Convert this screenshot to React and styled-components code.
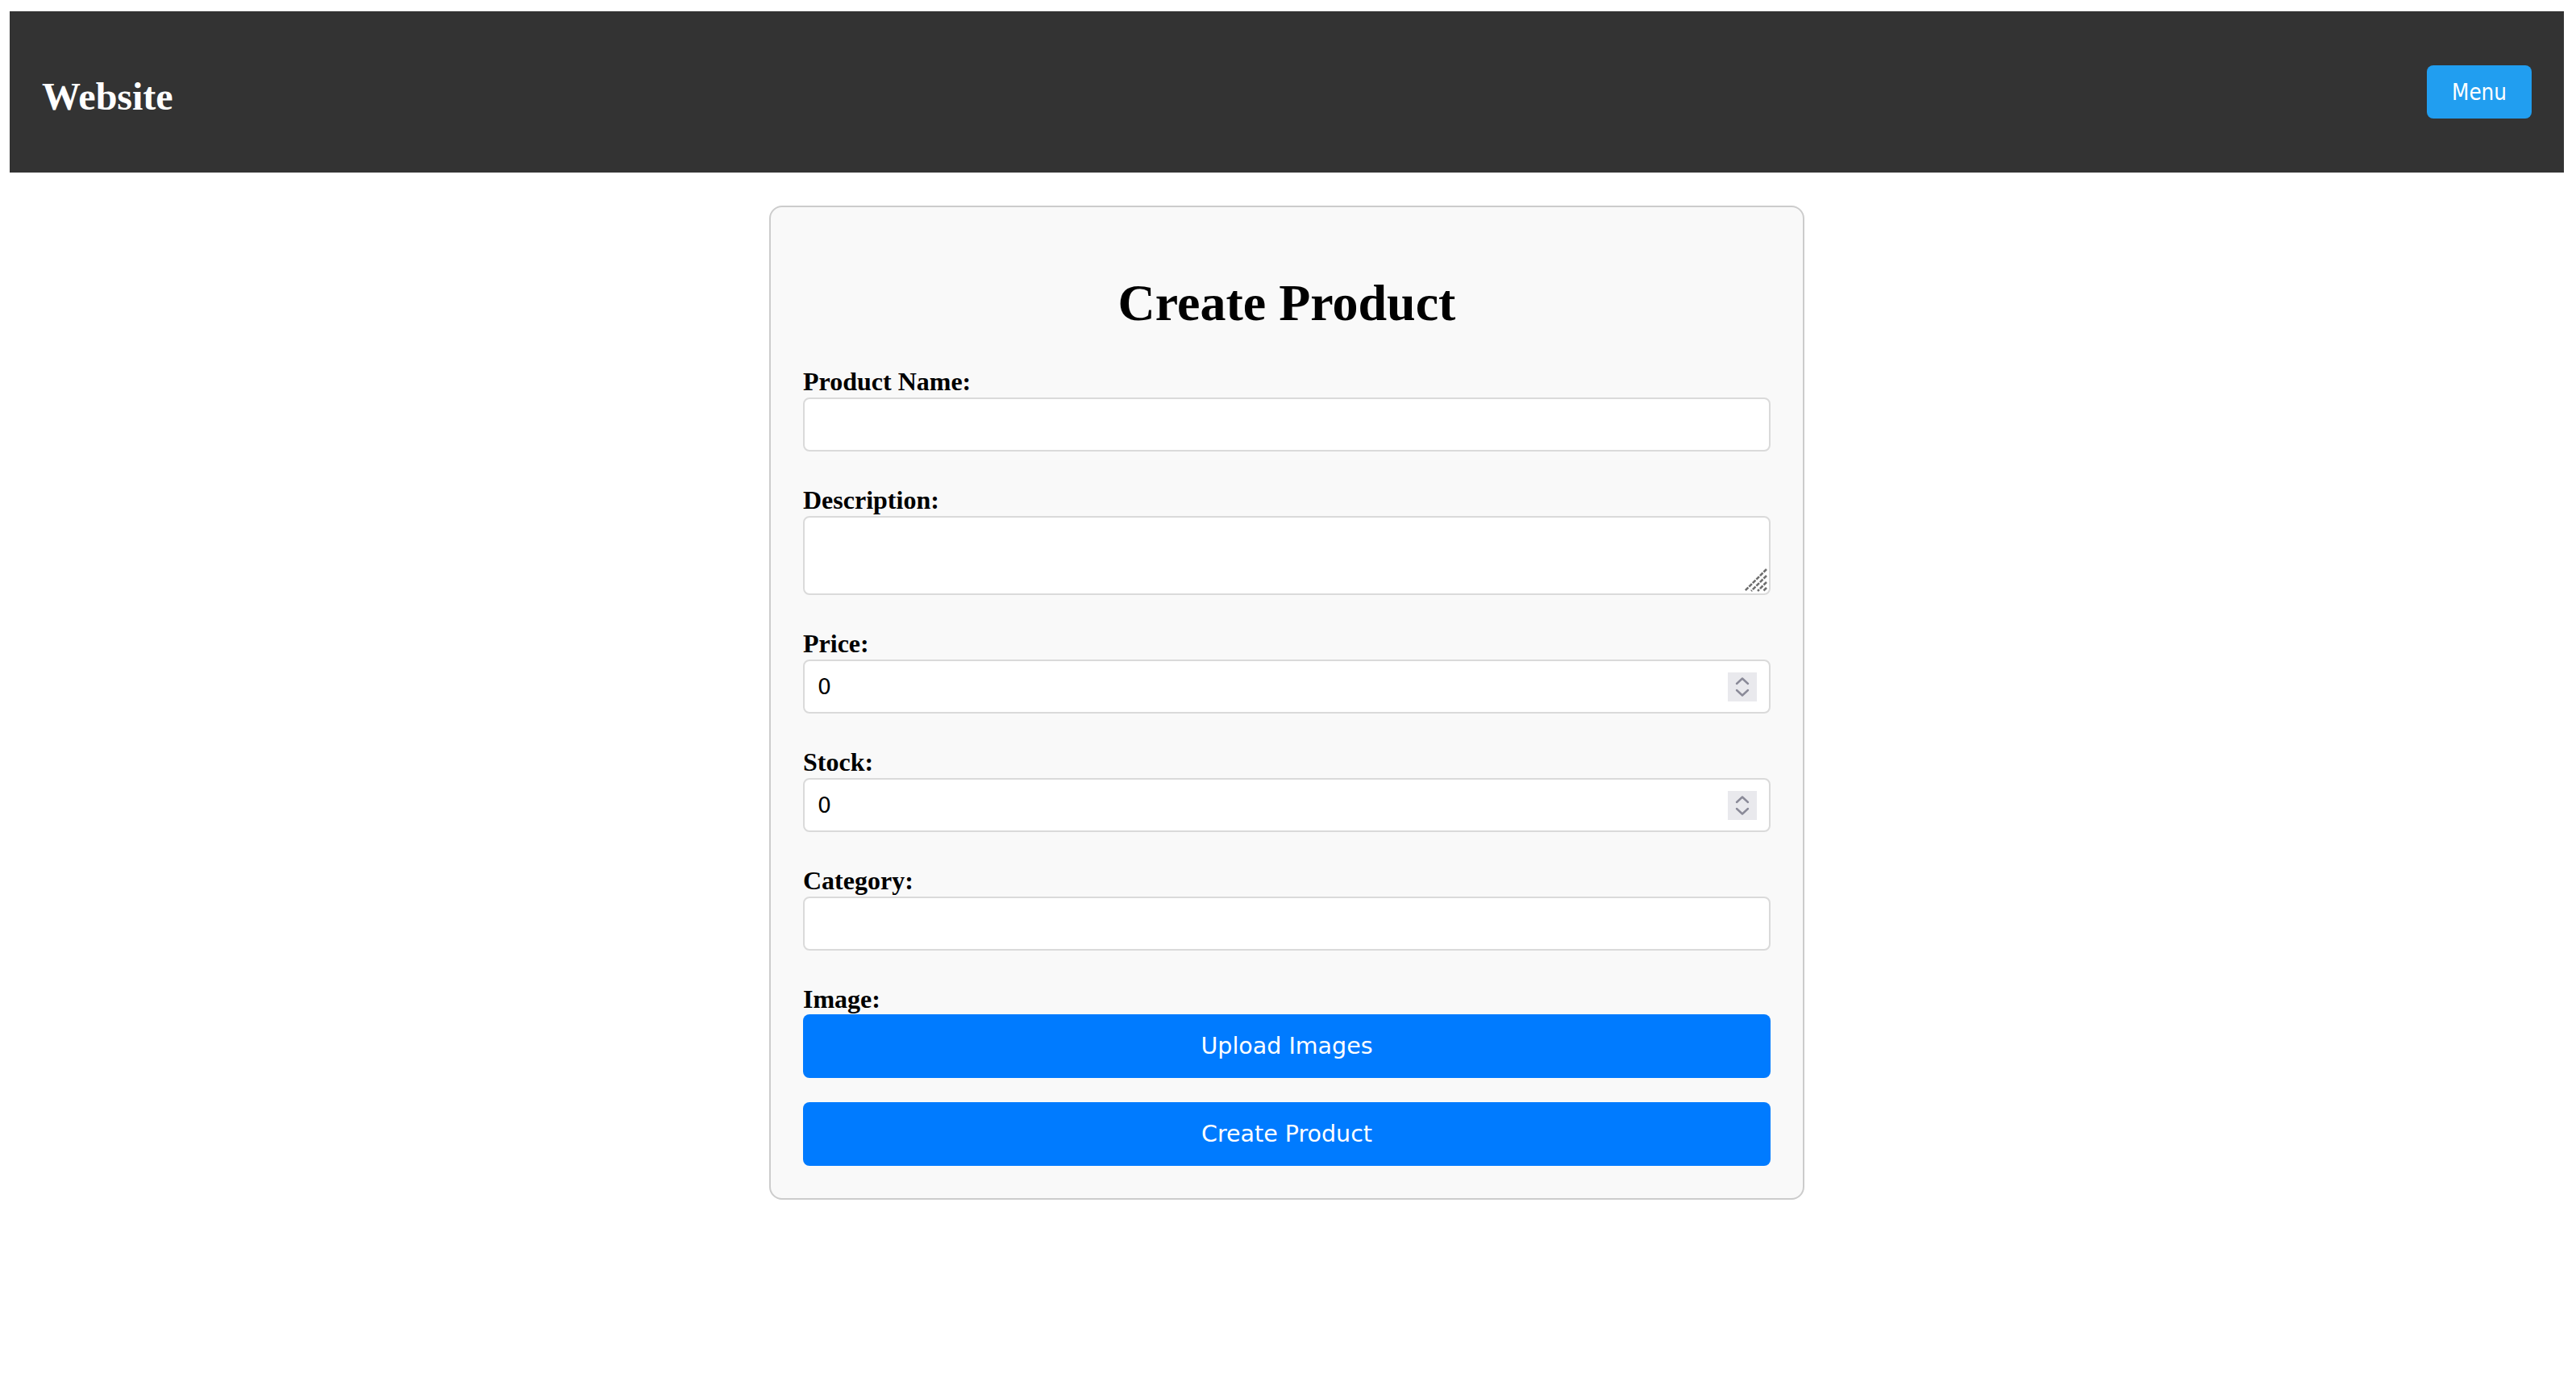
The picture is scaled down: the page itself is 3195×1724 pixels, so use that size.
import React from "react";
import styled, { createGlobalStyle } from "styled-components";

const GlobalStyle = createGlobalStyle`
  html, body {
    background: #ffffff;
  }
  body {
    margin: 14px 15px 0 12px;
    font-family: "Liberation Serif", "Times New Roman", serif;
    color: #000;
  }
  * {
    box-sizing: border-box;
  }
`;

const Header = styled.header`
  height: 200px;
  background: #333333;
  display: flex;
  align-items: center;
  justify-content: space-between;
  padding: 0 40px;
`;

const Logo = styled.h1`
  margin: 12px 0 0;
  font-family: "Liberation Serif", "Times New Roman", serif;
  font-weight: 700;
  font-size: 48px;
  line-height: 56px;
  color: #ffffff;
`;

const MenuButton = styled.button`
  height: 66px;
  padding: 0 31px;
  border: none;
  border-radius: 8px;
  background: #219ef0;
  color: #ffffff;
  font-family: "DejaVu Sans Condensed", "DejaVu Sans", sans-serif;
  font-stretch: condensed;
  font-size: 27.5px;
  cursor: pointer;
`;

const Card = styled.main`
  max-width: 1284px;
  margin: 41px auto 0;
  padding: 40px;
  border: 2px solid #cccccc;
  border-radius: 16px;
  background: #f9f9f9;
`;

const Title = styled.h2`
  margin: 43px 0 43px;
  text-align: center;
  font-family: "Liberation Serif", "Times New Roman", serif;
  font-weight: 700;
  font-size: 64px;
  line-height: 72px;
`;

const Form = styled.form`
  display: flex;
  flex-direction: column;
`;

const Group = styled.div`
  display: flex;
  flex-direction: column;
  margin-bottom: ${(p) => (p.$last ? "0" : "42px")};
`;

const Label = styled.label`
  display: block;
  margin-bottom: ${(p) => (p.$tight ? "1px" : "2px")};
  font-family: "Liberation Serif", "Times New Roman", serif;
  font-weight: 700;
  font-size: 32px;
  line-height: 36px;
`;

const fieldBase = `
  width: 100%;
  border: 2px solid #dadada;
  border-radius: 8px;
  background: #ffffff;
  font-family: "DejaVu Sans", Verdana, sans-serif;
  font-size: 26.67px;
  color: #000;
  outline: none;
`;

const TextInput = styled.input`
  ${fieldBase}
  display: block;
  height: 67px;
  padding: 0 16px;
`;

const AreaWrap = styled.div`
  position: relative;
`;

const TextArea = styled.textarea`
  ${fieldBase}
  display: block;
  height: 98px;
  padding: 16px;
  resize: none;
`;

const Grip = styled.svg`
  position: absolute;
  right: 4px;
  bottom: 4px;
  width: 29px;
  height: 29px;
  pointer-events: none;
`;

const NumberBox = styled.div`
  ${fieldBase}
  height: 67px;
  display: flex;
  align-items: center;
  gap: 12px;
  padding: 0 15px 0 16px;
`;

const NumberInput = styled.input`
  flex: 1;
  min-width: 0;
  border: none;
  background: transparent;
  padding: 0;
  font-family: "DejaVu Sans", Verdana, sans-serif;
  font-size: 26.67px;
  color: #000;
  outline: none;
  -moz-appearance: textfield;
  &::-webkit-inner-spin-button,
  &::-webkit-outer-spin-button {
    -webkit-appearance: none;
    margin: 0;
  }
`;

const SpinIcon = styled.svg`
  flex: none;
  width: 36px;
  height: 36px;
  display: block;
`;

const ActionButton = styled.button`
  display: block;
  width: 100%;
  height: 78.5px;
  margin-top: ${(p) => (p.$spaced ? "30.5px" : "0")};
  border: none;
  border-radius: 8px;
  background: #007bff;
  color: #ffffff;
  font-family: "DejaVu Sans", Verdana, sans-serif;
  font-size: 28.5px;
  cursor: pointer;
`;

function Spinner() {
  return (
    <SpinIcon viewBox="0 0 36 36" aria-hidden="true">
      <rect x="0" y="0" width="36" height="36" fill="#e9e9ed" />
      <polyline
        points="11,14 18,7.5 25,14"
        fill="none"
        stroke="#8a8a98"
        strokeWidth="2.4"
        strokeLinecap="round"
        strokeLinejoin="round"
      />
      <polyline
        points="11,22 18,28.5 25,22"
        fill="none"
        stroke="#8a8a98"
        strokeWidth="2.4"
        strokeLinecap="round"
        strokeLinejoin="round"
      />
    </SpinIcon>
  );
}

function NumberField({ id }) {
  return (
    <NumberBox>
      <NumberInput id={id} type="number" defaultValue={0} />
      <Spinner />
    </NumberBox>
  );
}

function ResizeGrip() {
  return (
    <Grip viewBox="0 0 29 29" aria-hidden="true">
      <g stroke="#6e6e6e" strokeWidth="2.6" strokeDasharray="5 1.4">
        <line x1="28" y1="1" x2="1" y2="28" />
        <line x1="28" y1="9" x2="9" y2="28" />
        <line x1="28" y1="17" x2="17" y2="28" />
        <line x1="28" y1="24" x2="24" y2="28" />
      </g>
    </Grip>
  );
}

export default function App() {
  return (
    <>
      <GlobalStyle />
      <Header>
        <Logo>Website</Logo>
        <MenuButton type="button">Menu</MenuButton>
      </Header>
      <Card>
        <Title>Create Product</Title>
        <Form onSubmit={(e) => e.preventDefault()}>
          <Group>
            <Label htmlFor="name">Product Name:</Label>
            <TextInput id="name" type="text" />
          </Group>
          <Group>
            <Label htmlFor="description">Description:</Label>
            <AreaWrap>
              <TextArea id="description" />
              <ResizeGrip />
            </AreaWrap>
          </Group>
          <Group>
            <Label htmlFor="price">Price:</Label>
            <NumberField id="price" />
          </Group>
          <Group>
            <Label htmlFor="stock">Stock:</Label>
            <NumberField id="stock" />
          </Group>
          <Group>
            <Label htmlFor="category">Category:</Label>
            <TextInput id="category" type="text" />
          </Group>
          <Group $last>
            <Label $tight>Image:</Label>
            <ActionButton type="button">Upload Images</ActionButton>
            <ActionButton type="submit" $spaced>
              Create Product
            </ActionButton>
          </Group>
        </Form>
      </Card>
    </>
  );
}
